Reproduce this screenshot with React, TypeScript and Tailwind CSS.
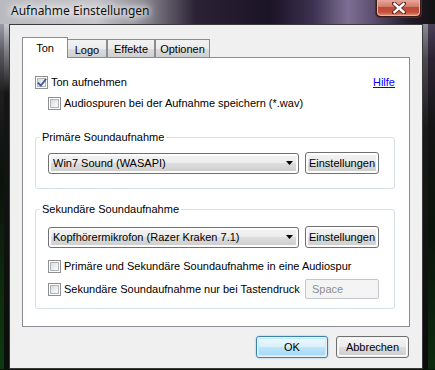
import React from "react";

function Check({ checked }: { checked?: boolean }) {
  return (
    <span className="relative w-[13px] h-[13px] shrink-0 border border-[#8e8f8f] bg-white p-[1px] flex">
      <span className="flex-1 border border-[#b1b5ba] bg-[linear-gradient(135deg,#d8dadd_0%,#eceef0_55%,#fbfbfb_100%)]" />
      {checked && (
        <svg className="absolute left-[1px] top-[1px]" width="10" height="10" viewBox="0 0 10 10">
          <path d="M1.5 5.2 L3.8 7.6 L8.6 1.6" fill="none" stroke="#3e5a9a" strokeWidth="1.8" strokeLinecap="square" />
        </svg>
      )}
    </span>
  );
}

function Btn({ children, w, primary }: { children: React.ReactNode; w: string; primary?: boolean }) {
  return (
    <div
      className={
        "h-[22px] rounded-[3px] border flex items-center justify-center p-[1px] " +
        w +
        (primary
          ? " border-[#3c7fb1] shadow-[0_0_2px_#7cc6ef]"
          : " border-[#707070]")
      }
    >
      <div
        className={
          "w-full h-full rounded-[2px] flex items-center justify-center border " +
          (primary
            ? "border-[#c7ecfb] bg-[linear-gradient(to_bottom,#eaf6fd_0%,#d9f0fc_50%,#bee6fd_50%,#a7d9f5_100%)]"
            : "border-[#fbfbfb] bg-[linear-gradient(to_bottom,#f2f2f2_0%,#ebebeb_50%,#dddddd_50%,#cfcfcf_100%)]")
        }
      >
        <span className="text-[11px] text-black leading-none">{children}</span>
      </div>
    </div>
  );
}

function Combo({ text }: { text: string }) {
  return (
    <div className="w-[251px] h-[21px] rounded-[3px] border border-[#707070] p-[1px] shrink-0">
      <div className="w-full h-full rounded-[2px] border border-[#fbfbfb] bg-[linear-gradient(to_bottom,#f2f2f2_0%,#ebebeb_50%,#dddddd_50%,#cfcfcf_100%)] flex items-center pl-[2px] pr-[3px]">
        <span className="flex-1 text-[11px] leading-none text-black">{text}</span>
        <svg width="7" height="4" viewBox="0 0 7 4">
          <path d="M0 0 H7 L3.5 4 Z" fill="#000" />
        </svg>
      </div>
    </div>
  );
}

function Group({ title, children, className }: { title: string; children: React.ReactNode; className?: string }) {
  return (
    <fieldset className={"border border-[#d5dfe5] rounded-[3px] m-0 p-0 min-w-0 " + (className || "")}>
      <legend className="ml-[4px] px-[2px] text-[11px] leading-[14px] text-black">{title}</legend>
      {children}
    </fieldset>
  );
}

export default function App() {
  return (
    <div
      className="w-[435px] h-[370px] overflow-hidden flex flex-col pb-[1px] bg-[#0b140b]"
      style={{ fontFamily: '"Liberation Sans", Arial, sans-serif' }}
    >
      {/* title bar */}
      <div className="h-[24px] shrink-0 flex bg-[linear-gradient(to_right,#b9bac0_0%,#c4c4ca_22%,#8c8a94_33%,#2b2234_45%,#1b1326_62%,#3c3150_72%,#7d6f93_80%,#5a4d6e_86%,#231a2b_94%,#121212_100%)]">
        <div
          className="flex-1 pl-[11px] pt-[3px] text-[12px] leading-[16px] text-[#111] [text-shadow:0_0_6px_#fff,0_0_10px_#fff,0_0_12px_#fff]"
          style={{ fontFamily: '"Noto Sans", "Liberation Sans", sans-serif' }}
        >
          Aufnahme Einstellungen
        </div>
        <div className="mr-[13px] w-[47px] h-[18px] rounded-b-[5px] border border-t-0 border-[#5a2a24] p-[1px] pt-0 bg-[#3a1c18]">
          <div className="w-full h-full rounded-b-[4px] border border-t-0 border-[#e9b4a8] bg-[linear-gradient(to_bottom,#e8a79a_0%,#d37a6a_45%,#c04a36_50%,#c0503a_80%,#d9836a_100%)] flex items-center justify-center">
            <svg width="14" height="12" viewBox="0 0 14 12">
              <path d="M2 1.5 L12 10.5 M12 1.5 L2 10.5" stroke="#5b2a22" strokeWidth="4.2" strokeLinecap="square" />
              <path d="M2.5 2 L11.5 10 M11.5 2 L2.5 10" stroke="#ffffff" strokeWidth="2.4" strokeLinecap="square" />
            </svg>
          </div>
        </div>
      </div>

      <div className="flex-1 flex min-h-0">
        <div className="w-[9px] shrink-0 bg-[linear-gradient(to_bottom,#9c9ca4_0%,#5a5a60_8%,#1d1d1f_20%,#0b120b_45%,#0e2a0e_75%,#0f3a10_100%)] flex justify-end">
          <div className="w-[5px] bg-[linear-gradient(to_bottom,#c8c8ce_0%,#7d7d84_8%,#151515_20%,#0a0f0a_100%)]" />
        </div>

        {/* client */}
        <div className="flex-1 border border-[#3b3b3b] bg-[#f0f0f0] flex flex-col">
          {/* tabs */}
          <div className="pt-[12px] px-[12px]">
            <div className="flex items-end h-[21px] relative z-10 -mb-px text-[11px] text-black">
              <div className="w-[46px] h-[21px] border border-b-0 border-[#898c95] bg-white flex justify-center pt-[3px] leading-[14px]">
                Ton
              </div>
              <div className="w-[39px] h-[19px] border border-l-0 border-[#898c95] bg-[linear-gradient(to_bottom,#f2f2f2_0%,#ebebeb_50%,#dddddd_50%,#cfcfcf_100%)] flex justify-center pt-[3px] leading-[14px]">
                Logo
              </div>
              <div className="w-[48px] h-[19px] border border-[#898c95] bg-[linear-gradient(to_bottom,#f2f2f2_0%,#ebebeb_50%,#dddddd_50%,#cfcfcf_100%)] flex justify-center pt-[2px] leading-[14px]">
                Effekte
              </div>
              <div className="w-[55px] h-[19px] border border-[#898c95] bg-[linear-gradient(to_bottom,#f2f2f2_0%,#ebebeb_50%,#dddddd_50%,#cfcfcf_100%)] flex justify-center pt-[2px] leading-[14px]">
                Optionen
              </div>
            </div>

            {/* panel */}
            <div className="h-[270px] border border-[#898c95] bg-white pl-[12px] pr-[14px] pt-[18px] text-[11px] text-black flex flex-col">
              <div className="h-[13px] flex items-center">
                <Check checked />
                <span className="ml-[3px] leading-[13px]">Ton aufnehmen</span>
                <span className="ml-auto leading-[13px] text-[#0000ff] underline">Hilfe</span>
              </div>
              <div className="h-[13px] mt-[8px] ml-[13px] flex items-center">
                <Check />
                <span className="ml-[3px] leading-[13px]">Audiospuren bei der Aufnahme speichern (*.wav)</span>
              </div>

              <Group title="Primäre Soundaufnahme" className="mt-[20px]">
                <div className="pl-[12px] pt-[8px] pb-[14px] flex items-center gap-[6px]">
                  <Combo text="Win7 Sound (WASAPI)" />
                  <Btn w="w-[74px]">Einstellungen</Btn>
                </div>
              </Group>

              <Group title="Sekundäre Soundaufnahme" className="mt-[13px]">
                <div className="pl-[12px] pt-[10px] pb-[9px] flex flex-col">
                  <div className="flex items-center gap-[6px]">
                    <Combo text="Kopfhörermikrofon (Razer Kraken 7.1)" />
                    <Btn w="w-[74px]">Einstellungen</Btn>
                  </div>
                  <div className="h-[13px] mt-[12px] flex items-center">
                    <Check />
                    <span className="ml-[3px] leading-[13px]">Primäre und Sekundäre Soundaufnahme in eine Audiospur</span>
                  </div>
                  <div className="w-[331px] h-[20px] mt-[6px] flex items-center">
                    <Check />
                    <span className="ml-[3px] leading-[13px]">Sekundäre Soundaufnahme nur bei Tastendruck</span>
                    <div className="ml-auto w-[74px] h-[20px] rounded-[2px] border border-[#c3c6ca] bg-[#f4f4f4] flex items-center pl-[6px] text-[#8d8d8d] leading-none">
                      Space
                    </div>
                  </div>
                </div>
              </Group>
            </div>
          </div>

          {/* bottom buttons */}
          <div className="mt-[9px] pr-[13px] flex justify-end gap-[8px]">
            <Btn w="w-[72px]" primary>OK</Btn>
            <Btn w="w-[73px]">Abbrechen</Btn>
          </div>
        </div>

        <div className="w-[12px] shrink-0 bg-[linear-gradient(to_bottom,#4a3f58_0%,#2a2232_10%,#141414_30%,#0a140a_60%,#0d2a0e_100%)] flex">
          <div className="w-[5px] bg-[linear-gradient(to_bottom,#8b8a92_0%,#4a4a50_10%,#1a1a1a_30%,#0c0c0c_100%)]" />
        </div>
      </div>
    </div>
  );
}
